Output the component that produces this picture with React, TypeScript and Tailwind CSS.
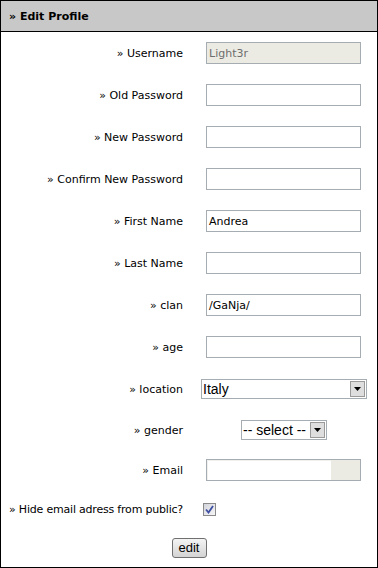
import React from "react";

function Row({ h, label, children, labelClass = "" }: { h: string; label: string; children?: React.ReactNode; labelClass?: string }) {
  return (
    <div className={`flex items-center shrink-0 ${h}`}>
      <div className={`w-[182px] shrink-0 text-right whitespace-nowrap ${labelClass}`}>{label}</div>
      {children}
    </div>
  );
}

function TextBox({ value = "", disabled = false }: { value?: string; disabled?: boolean }) {
  return (
    <div
      className={`ml-[23px] w-[155px] h-[22px] border border-[#a5acb2] flex items-center pl-[2px] ${
        disabled ? "bg-[#ebebe4] text-[#6d6d6d]" : "bg-white text-black"
      }`}
    >
      {value}
    </div>
  );
}

function DropBtn() {
  return (
    <div className="w-[15px] h-[16px] m-[1px] shrink-0 border border-[#9a9a9a] bg-[#dedede] flex items-center justify-center">
      <svg width="7" height="4" viewBox="0 0 7 4">
        <polygon points="0,0 7,0 3.5,4" fill="#000" />
      </svg>
    </div>
  );
}

export default function App() {
  return (
    <div className="w-[378px] h-[568px] border border-black bg-white flex flex-col font-['DejaVu_Sans',sans-serif] text-[11px] text-black leading-none">
      <div className="h-[31px] shrink-0 bg-[#c8c8c8] border-b border-black flex items-center pl-[8px] font-bold">
        » Edit Profile
      </div>
      <Row h="h-[42px]" label="» Username">
        <TextBox value="Light3r" disabled />
      </Row>
      <Row h="h-[42px]" label="» Old Password">
        <TextBox />
      </Row>
      <Row h="h-[42px]" label="» New Password">
        <TextBox />
      </Row>
      <Row h="h-[42px]" label="» Confirm New Password">
        <TextBox />
      </Row>
      <Row h="h-[42px]" label="» First Name">
        <TextBox value="Andrea" />
      </Row>
      <Row h="h-[42px]" label="» Last Name">
        <TextBox />
      </Row>
      <Row h="h-[42px]" label="» clan">
        <TextBox value="/GaNja/" />
      </Row>
      <Row h="h-[42px]" label="» age">
        <TextBox />
      </Row>
      <Row h="h-[42px]" label="» location">
        <div className="ml-[18px] w-[166px] h-[20px] border border-[#a5acb2] bg-white flex items-center font-['Liberation_Sans',Arial,sans-serif] text-[14px]">
          <div className="flex-1 pl-[1px]">Italy</div>
          <DropBtn />
        </div>
      </Row>
      <Row h="h-[40px]" label="» gender">
        <div className="ml-[58px] w-[86px] h-[20px] border border-[#a5acb2] bg-white flex items-center font-['Liberation_Sans',Arial,sans-serif] text-[14px]">
          <div className="flex-1 pl-[1px] whitespace-nowrap">-- select --</div>
          <DropBtn />
        </div>
      </Row>
      <Row h="h-[40px]" label="» Email">
        <div className="ml-[23px] w-[155px] h-[22px] border border-[#a5acb2] bg-[#ebebe4] flex">
          <div className="w-[124px] h-full bg-white border-t border-l border-[#f0f0ee]" />
        </div>
      </Row>
      <Row h="h-[38px]" label="» Hide email adress from public?" labelClass="tracking-[-0.2px]">
        <div className="ml-[20px] w-[13px] h-[13px] border border-[#8a8a8a] bg-gradient-to-br from-[#d4d4dc] to-[#f6f6f8] flex items-center justify-center">
          <svg width="9" height="9" viewBox="0 0 9 9">
            <path d="M1 4.5 L3.5 7.5 L8 1" stroke="#3c4fa0" strokeWidth="1.8" fill="none" />
          </svg>
        </div>
      </Row>
      <div className="flex-1 flex items-center justify-center">
        <div className="w-[35px] h-[20px] border border-[#707070] rounded-[3px] bg-gradient-to-b from-[#f4f4f4] to-[#d4d4d4] flex items-center justify-center font-['Liberation_Sans',Arial,sans-serif] text-[13px] text-black">
          edit
        </div>
      </div>
    </div>
  );
}
